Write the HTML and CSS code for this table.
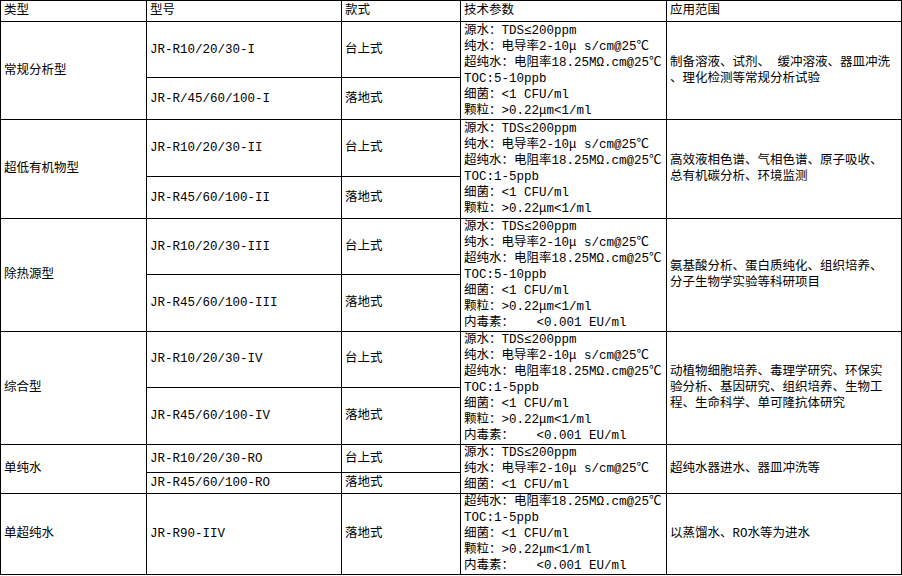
FILE: index.html
```html
<!DOCTYPE html>
<html lang="zh-CN">
<head>
<meta charset="utf-8">
<title>纯水机型号参数</title>
<link rel="stylesheet" href="styles.css">
</head>
<body>
<table class="spec">
  <colgroup>
    <col class="c-type">
    <col class="c-model">
    <col class="c-style">
    <col class="c-tech">
    <col class="c-app">
  </colgroup>
  <tr class="h-head">
    <td>类型</td><td>型号</td><td>款式</td><td>技术参数</td><td>应用范围</td>
  </tr>

  <tr class="r1a">
    <td rowspan="2">常规分析型</td>
    <td>JR-R10/20/30-I</td>
    <td>台上式</td>
    <td rowspan="2">源水：TDS≤200ppm<br>纯水：电导率2-10μ s/cm@25℃<br>超纯水：电阻率18.25MΩ.cm@25℃<br>TOC:5-10ppb<br>细菌：&lt;1 CFU/ml<br>颗粒：&gt;0.22μm&lt;1/ml</td>
    <td rowspan="2">制备溶液、试剂、 缓冲溶液、器皿冲洗<br>、理化检测等常规分析试验</td>
  </tr>
  <tr class="r1b">
    <td>JR-R/45/60/100-I</td>
    <td>落地式</td>
  </tr>

  <tr class="r2a">
    <td rowspan="2">超低有机物型</td>
    <td>JR-R10/20/30-II</td>
    <td>台上式</td>
    <td rowspan="2">源水：TDS≤200ppm<br>纯水：电导率2-10μ s/cm@25℃<br>超纯水：电阻率18.25MΩ.cm@25℃<br>TOC:1-5ppb<br>细菌：&lt;1 CFU/ml<br>颗粒：&gt;0.22μm&lt;1/ml</td>
    <td rowspan="2">高效液相色谱、气相色谱、原子吸收、<br>总有机碳分析、环境监测</td>
  </tr>
  <tr class="r2b">
    <td>JR-R45/60/100-II</td>
    <td>落地式</td>
  </tr>

  <tr class="r3a">
    <td rowspan="2">除热源型</td>
    <td>JR-R10/20/30-III</td>
    <td>台上式</td>
    <td rowspan="2">源水：TDS≤200ppm<br>纯水：电导率2-10μ s/cm@25℃<br>超纯水：电阻率18.25MΩ.cm@25℃<br>TOC:5-10ppb<br>细菌：&lt;1 CFU/ml<br>颗粒：&gt;0.22μm&lt;1/ml<br>内毒素：&nbsp;&nbsp; &lt;0.001 EU/ml</td>
    <td rowspan="2">氨基酸分析、蛋白质纯化、组织培养、<br>分子生物学实验等科研项目</td>
  </tr>
  <tr class="r3b">
    <td>JR-R45/60/100-III</td>
    <td>落地式</td>
  </tr>

  <tr class="r4a">
    <td rowspan="2">综合型</td>
    <td>JR-R10/20/30-IV</td>
    <td>台上式</td>
    <td rowspan="2">源水：TDS≤200ppm<br>纯水：电导率2-10μ s/cm@25℃<br>超纯水：电阻率18.25MΩ.cm@25℃<br>TOC:1-5ppb<br>细菌：&lt;1 CFU/ml<br>颗粒：&gt;0.22μm&lt;1/ml<br>内毒素：&nbsp;&nbsp; &lt;0.001 EU/ml</td>
    <td rowspan="2">动植物细胞培养、毒理学研究、环保实<br>验分析、基因研究、组织培养、生物工<br>程、生命科学、单可隆抗体研究</td>
  </tr>
  <tr class="r4b">
    <td>JR-R45/60/100-IV</td>
    <td>落地式</td>
  </tr>

  <tr class="r5a">
    <td rowspan="2">单纯水</td>
    <td>JR-R10/20/30-RO</td>
    <td>台上式</td>
    <td rowspan="2">源水：TDS≤200ppm<br>纯水：电导率2-10μ s/cm@25℃<br>细菌：&lt;1 CFU/ml</td>
    <td rowspan="2">超纯水器进水、器皿冲洗等</td>
  </tr>
  <tr class="r5b">
    <td>JR-R45/60/100-RO</td>
    <td>落地式</td>
  </tr>

  <tr class="r6">
    <td>单超纯水</td>
    <td>JR-R90-IIV</td>
    <td>落地式</td>
    <td>超纯水：电阻率18.25MΩ.cm@25℃<br>TOC:1-5ppb<br>细菌：&lt;1 CFU/ml<br>颗粒：&gt;0.22μm&lt;1/ml<br>内毒素：&nbsp;&nbsp; &lt;0.001 EU/ml</td>
    <td>以蒸馏水、RO水等为进水</td>
  </tr>
</table>
</body>
</html>
```

FILE: styles.css
```css
html, body {
  margin: 0;
  padding: 0;
  background: #ffffff;
}

.spec {
  border-collapse: collapse;
  table-layout: fixed;
  width: 901px;
  font-family: "Liberation Mono", "Noto Sans CJK SC", monospace;
  font-size: 12.5px;
  color: #000000;
}

.c-type  { width: 146px; }
.c-model { width: 195px; }
.c-style { width: 119px; }
.c-tech  { width: 206px; }
.c-app   { width: 235px; }

.spec td {
  border: 1px solid #000000;
  padding: 0 1px 0 3px;
  line-height: 16px;
  vertical-align: middle;
  white-space: nowrap;
  overflow: hidden;
}

.h-head { height: 21px; }
.r1a { height: 56px; }
.r1b { height: 42px; }
.r2a { height: 57px; }
.r2b { height: 42px; }
.r3a { height: 56px; }
.r3b { height: 57px; }
.r4a { height: 55px; }
.r4b { height: 56px; }
.r5a { height: 28px; }
.r5b { height: 21px; }
.r6  { height: 80px; }
```
